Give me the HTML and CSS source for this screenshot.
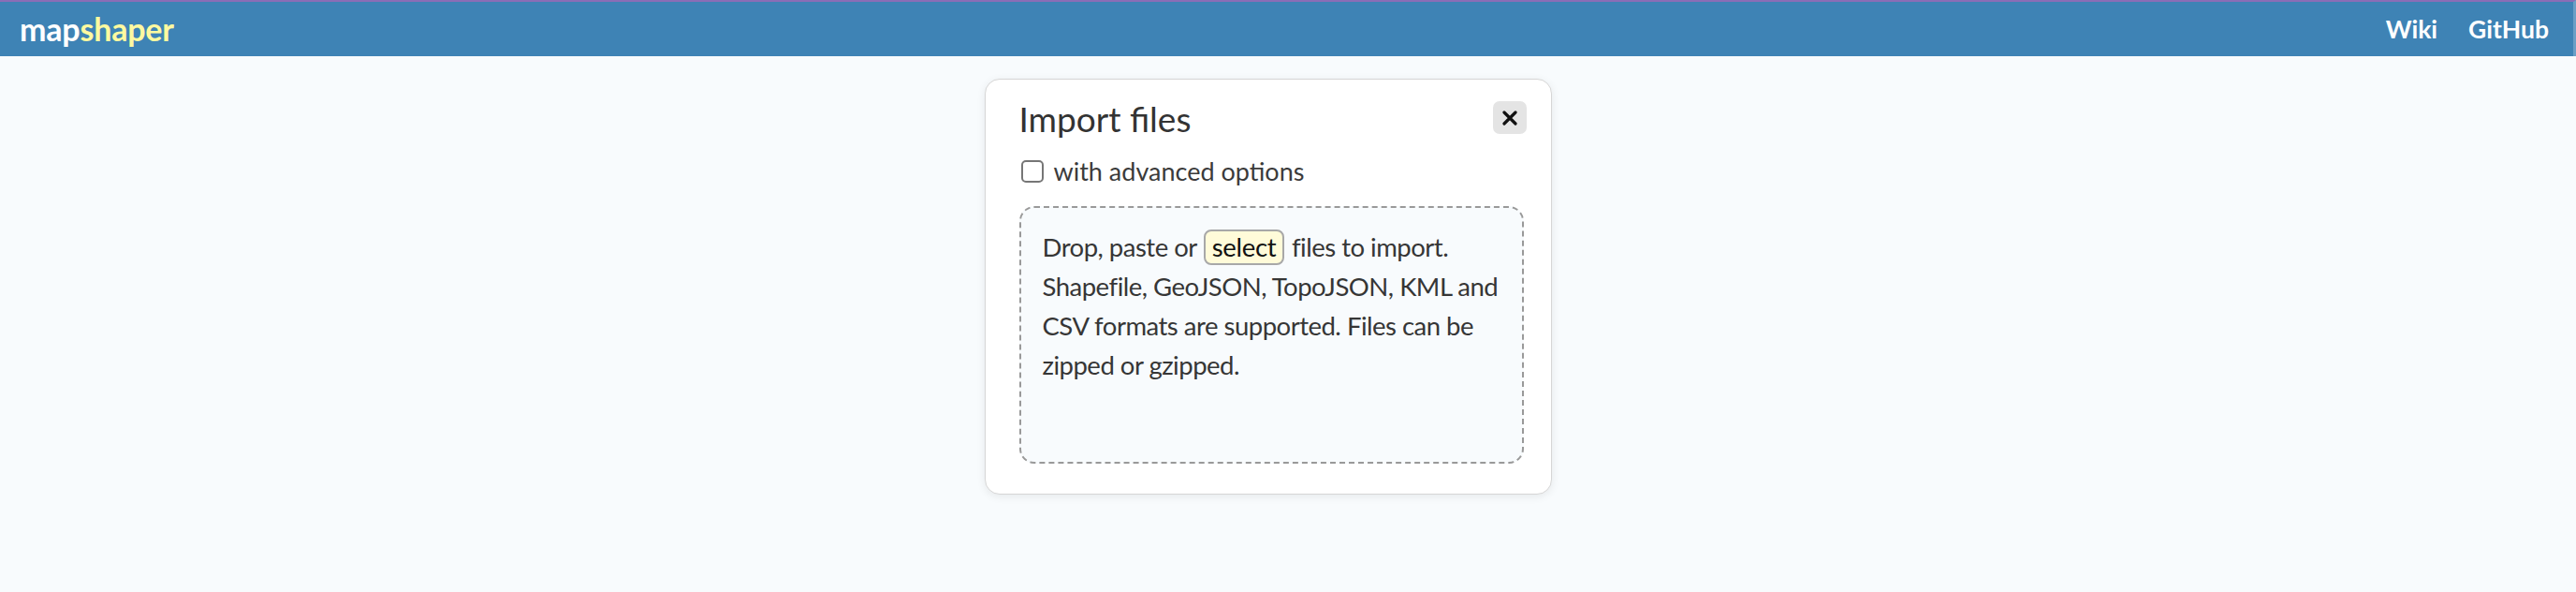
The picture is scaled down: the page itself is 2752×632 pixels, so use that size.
FILE: index.html
```html
<!DOCTYPE html>
<html lang="en">
<head>
<meta charset="utf-8">
<title>mapshaper</title>
<link rel="stylesheet" href="styles.css">
</head>
<body>
<header class="topbar">
  <div class="logo"><span class="logo-map">map</span><span class="logo-shaper">shaper</span></div>
  <nav class="links">
    <a class="link" href="#">Wiki</a>
    <a class="link" href="#">GitHub</a>
  </nav>
</header>
<main class="stage">
  <section class="dialog">
    <div class="dialog-head">
      <h1 class="dialog-title">Import files</h1>
      <button class="close-btn" type="button" aria-label="Close">
        <svg width="16" height="16" viewBox="0 0 16 16"><path d="M2 2 L14 14 M14 2 L2 14" stroke="#111" stroke-width="3.2" stroke-linecap="round"/></svg>
      </button>
    </div>
    <label class="option"><input class="check" type="checkbox"><span>with advanced options</span></label>
    <div class="dropzone">
      <p class="drop-text">Drop, paste or <span class="select-btn">select</span> files to import. Shapefile, GeoJSON, TopoJSON, KML and CSV formats are supported. Files can be zipped or gzipped.</p>
    </div>
  </section>
</main>
</body>
</html>
```
FILE: styles.css
```css
html, body {
  margin: 0;
  padding: 0;
}
body {
  background: #f8fbfd;
  font-family: Lato, "Open Sans", sans-serif;
  color: #3b3b3b;
  height: 632px;
  overflow: hidden;
}
.topbar {
  box-sizing: border-box;
  height: 60px;
  border-top: 2px solid #8a6db6;
  background: #3e83b5;
  display: flex;
  align-items: center;
  justify-content: space-between;
  padding: 0 26px 0 21px;
  border-right: 3px solid #6a9fc6;
}
.logo {
  font-weight: 700;
  font-size: 34px;
  letter-spacing: -0.2px;
  line-height: 1;
}
.logo-map { color: #ffffff; }
.logo-shaper { color: #fdf9a0; }
.links {
  display: flex;
  gap: 33px;
}
.link {
  color: #ffffff;
  font-weight: 700;
  font-size: 26.5px;
  text-decoration: none;
}
.stage {
  display: flex;
  justify-content: center;
  padding: 24px 43px 0 0;
}
.dialog {
  box-sizing: border-box;
  width: 606px;
  height: 444px;
  background: #ffffff;
  border: 1px solid #d6d6d6;
  border-radius: 16px;
  box-shadow: 0 2px 10px rgba(0, 0, 0, 0.08);
  padding: 22px 30px 30px 36px;
}
.dialog-head {
  display: flex;
  justify-content: space-between;
  align-items: flex-start;
}
.dialog-title {
  margin: -4px 0 0 0;
  font-weight: 400;
  font-size: 37px;
  line-height: 48px;
  color: #333333;
}
.close-btn {
  width: 36px;
  height: 35px;
  margin-top: 1px;
  margin-right: -4px;
  border: none;
  border-radius: 7px;
  background: #e4e4e4;
  display: flex;
  align-items: center;
  justify-content: center;
  padding: 0;
}
.option {
  display: flex;
  align-items: center;
  gap: 11px;
  margin: 15px 0 0 2px;
  font-size: 27px;
  line-height: 34px;
  color: #3b3b3b;
}
.check {
  appearance: none;
  -webkit-appearance: none;
  margin: 0;
  width: 24px;
  height: 24px;
  box-sizing: border-box;
  border: 2px solid #767676;
  border-radius: 5px;
  background: #ffffff;
}
.dropzone {
  box-sizing: border-box;
  margin-top: 20px;
  width: 539px;
  height: 275px;
  border: 2px dashed #999999;
  border-radius: 16px;
  background: #f8fbfd;
  padding: 21px 20px 0 23px;
}
.drop-text {
  margin: 0;
  font-size: 27.5px;
  letter-spacing: -0.5px;
  line-height: 42px;
  color: #363636;
}
.select-btn {
  display: inline-block;
  box-sizing: border-box;
  height: 38px;
  line-height: 34px;
  padding: 0 7px;
  margin: 0 1px;
  border: 2px solid #a8a8a8;
  border-radius: 8px;
  background: #fffbd9;
  color: #111111;
  letter-spacing: -0.3px;
}
```
